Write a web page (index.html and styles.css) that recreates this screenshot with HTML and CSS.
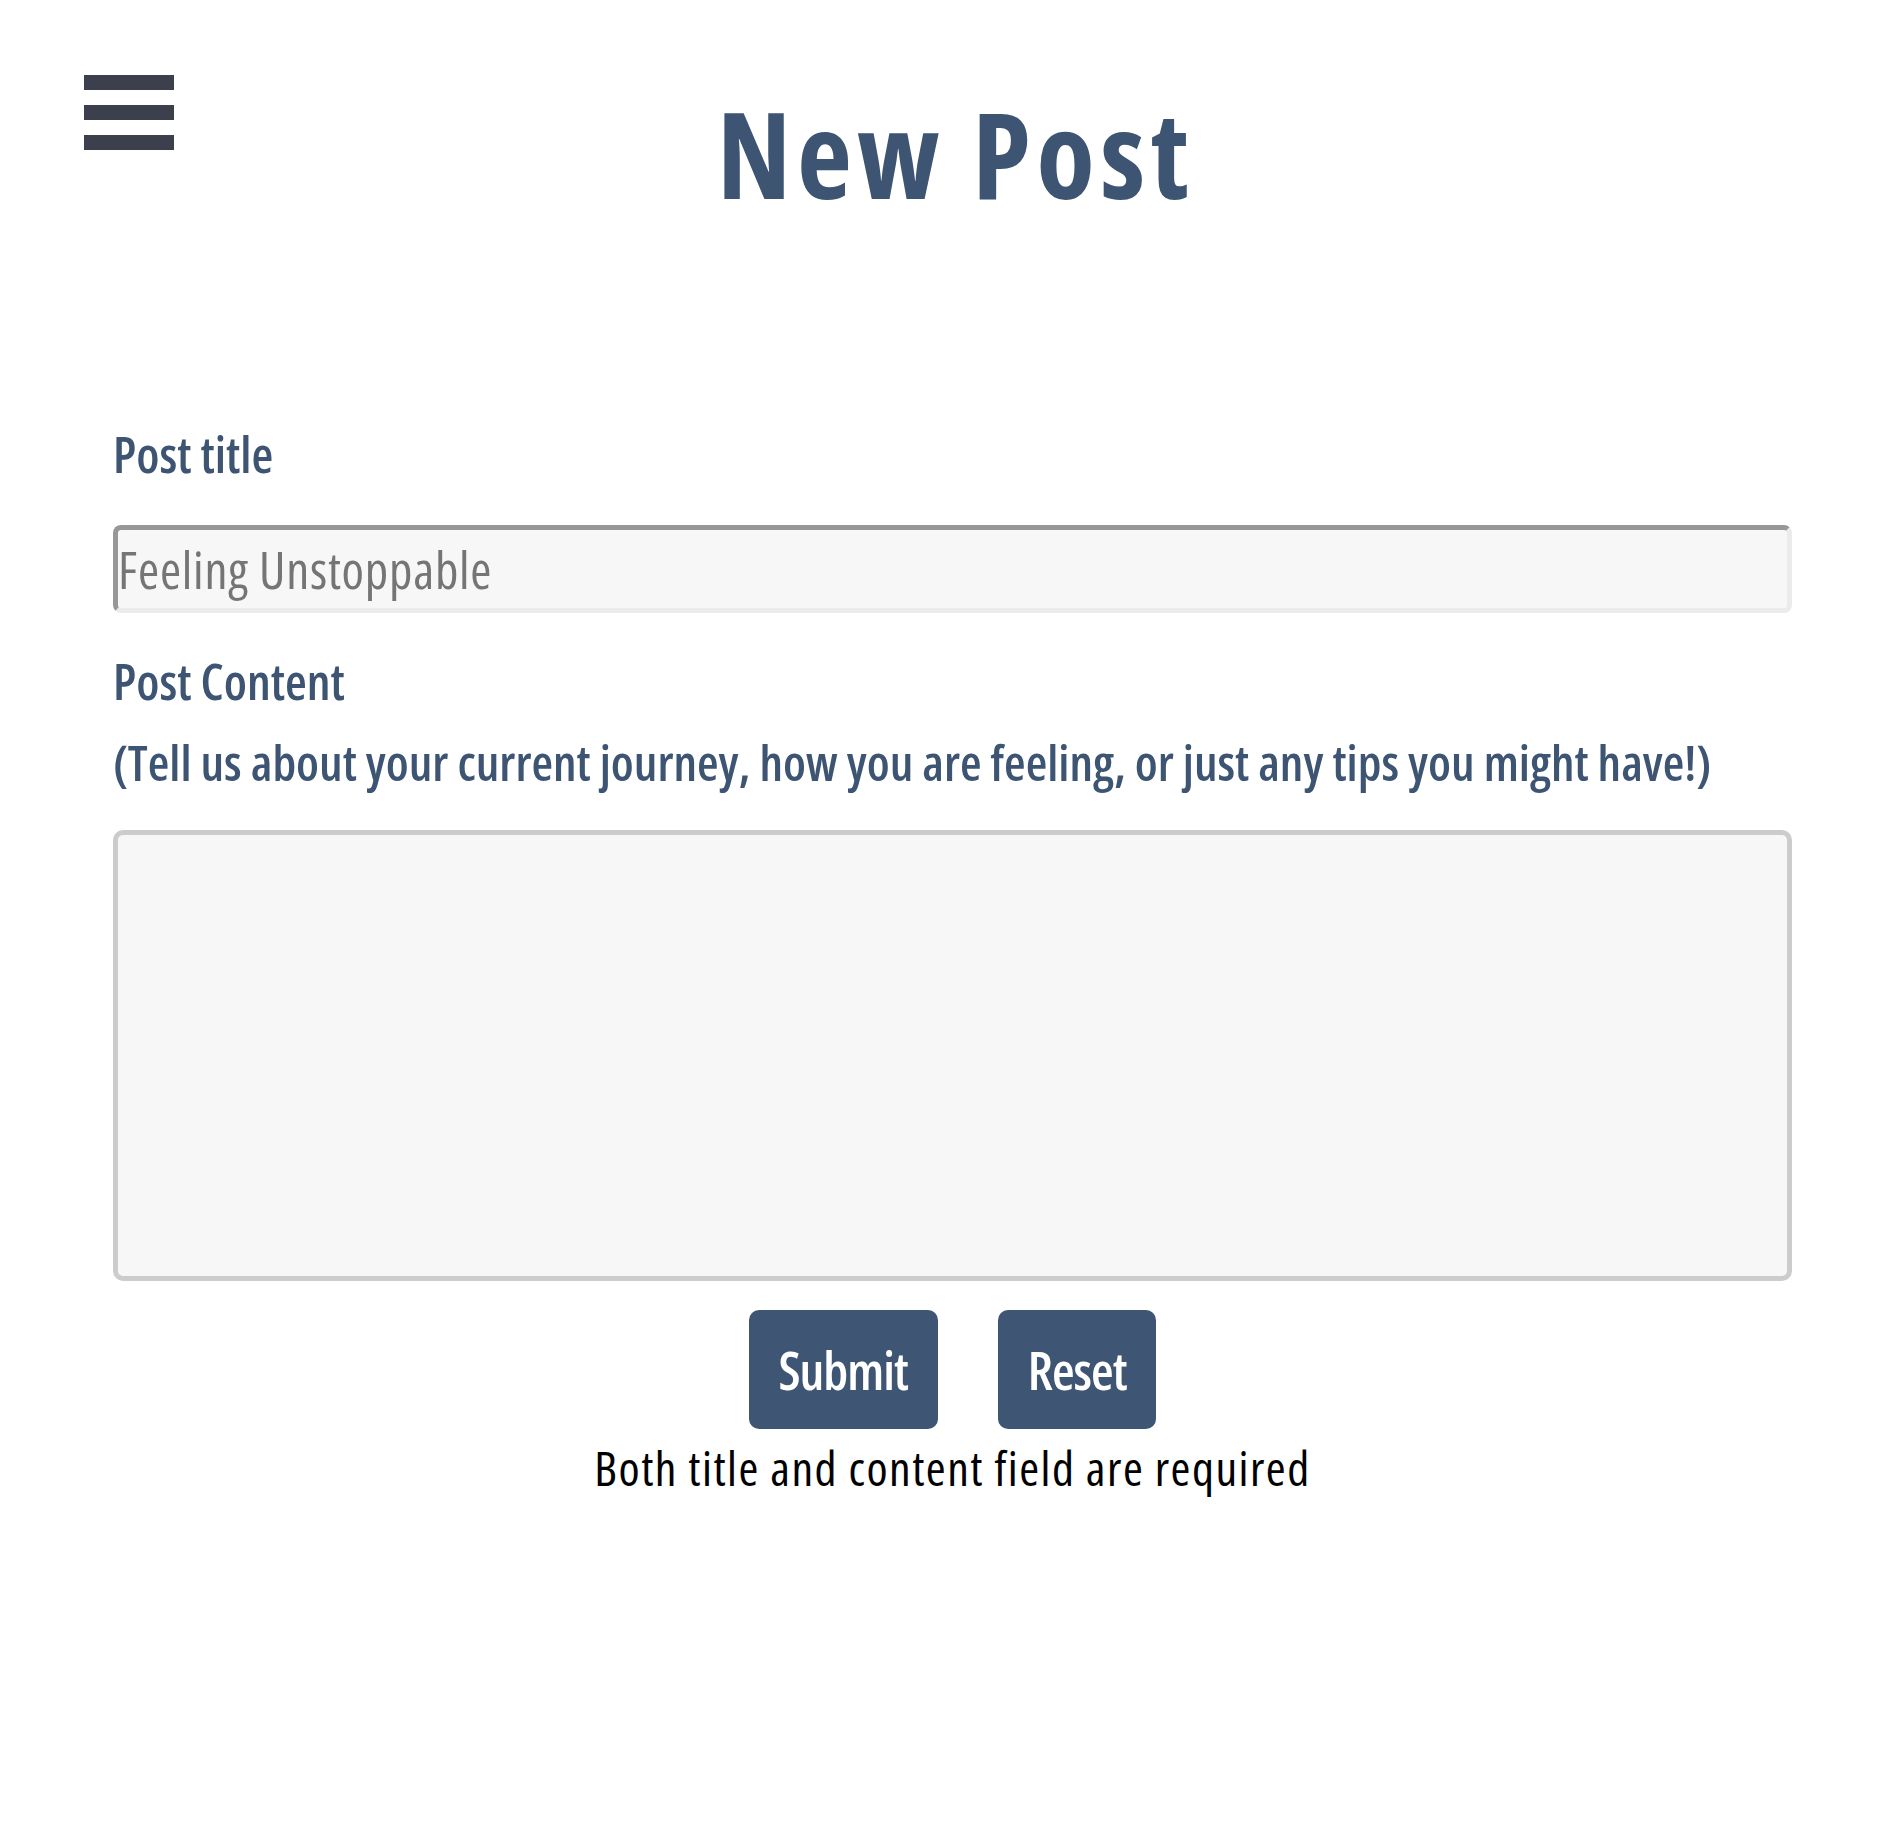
FILE: index.html
```html
<!DOCTYPE html>
<html lang="en">
<head>
<meta charset="utf-8">
<title>New Post</title>
<link rel="stylesheet" href="styles.css">
</head>
<body>
<button class="menu-toggle" type="button" aria-label="Menu">
  <span class="bar"></span>
  <span class="bar"></span>
  <span class="bar"></span>
</button>
<header class="page-header">
  <h1 class="page-title">New Post</h1>
</header>
<main class="post-form-wrap">
  <form class="post-form">
    <label class="field-label" for="title">Post title</label>
    <input class="title-input" id="title" type="text" placeholder="Feeling Unstoppable">
    <label class="field-label label-content" for="content">Post Content</label>
    <p class="field-hint">(Tell us about your current journey, how you are feeling, or just any tips you might have!)</p>
    <textarea class="content-input" id="content"></textarea>
    <div class="actions">
      <button class="btn" type="submit">Submit</button>
      <button class="btn" type="reset">Reset</button>
    </div>
    <p class="note">Both title and content field are required</p>
  </form>
</main>
</body>
</html>
```
FILE: styles.css
```css
html, body {
  margin: 0;
  padding: 0;
  background: #ffffff;
}
body {
  font-family: "Open Sans", "Liberation Sans", sans-serif;
  font-stretch: 75%;
  color: #000;
}
.menu-toggle {
  position: fixed;
  left: 84px;
  top: 75px;
  display: flex;
  flex-direction: column;
  gap: 15px;
  padding: 0;
  border: 0;
  background: transparent;
  cursor: pointer;
}
.menu-toggle .bar {
  display: block;
  width: 90px;
  height: 15px;
  background: #3c3f4c;
}
.page-header {
  padding-top: 81px;
}
.page-title {
  margin: 0;
  text-align: center;
  font-size: 120px;
  line-height: 143px;
  font-weight: 700;
  letter-spacing: 5.5px;
  color: #3d5573;
  padding-left: 20px;
}
.post-form-wrap {
  padding: 200px 99px 0 113px;
}
.post-form {
  display: flex;
  flex-direction: column;
}
.field-label {
  display: block;
  font-size: 50px;
  line-height: 60px;
  font-weight: 600;
  color: #3d5573;
}
.title-input {
  margin-top: 41px;
  box-sizing: border-box;
  width: 100%;
  height: 88px;
  padding: 0;
  border-width: 5px;
  border-style: solid;
  border-color: #979797 #ebebeb #ebebeb #979797;
  border-radius: 8px;
  background: #f7f7f7;
  font-family: inherit;
  font-stretch: 75%;
  font-size: 51px;
  letter-spacing: 0.8px;
  color: #222;
  outline: none;
}
.title-input::placeholder {
  color: #757575;
}
.label-content {
  margin-top: 38px;
}
.field-hint {
  margin: 21px 0 0;
  font-size: 49.5px;
  line-height: 60px;
  font-weight: 600;
  color: #3d5573;
}
.content-input {
  margin-top: 38px;
  box-sizing: border-box;
  width: 100%;
  height: 451px;
  border: 5px solid #cccccc;
  border-radius: 10px;
  background: #f7f7f7;
  resize: none;
  font-family: inherit;
  font-size: 46px;
  outline: none;
}
.actions {
  margin-top: 29px;
  display: flex;
  justify-content: center;
  gap: 60px;
}
.btn {
  height: 119px;
  padding: 0 30px;
  border: 0;
  border-radius: 10px;
  background: #3e5573;
  color: #ffffff;
  font-family: inherit;
  font-stretch: 75%;
  font-size: 52px;
  font-weight: 600;
  letter-spacing: -1px;
  cursor: pointer;
}
.note {
  margin: 10px 0 0;
  text-align: center;
  font-size: 48px;
  line-height: 58px;
  letter-spacing: 1.5px;
  color: #000;
}
```
